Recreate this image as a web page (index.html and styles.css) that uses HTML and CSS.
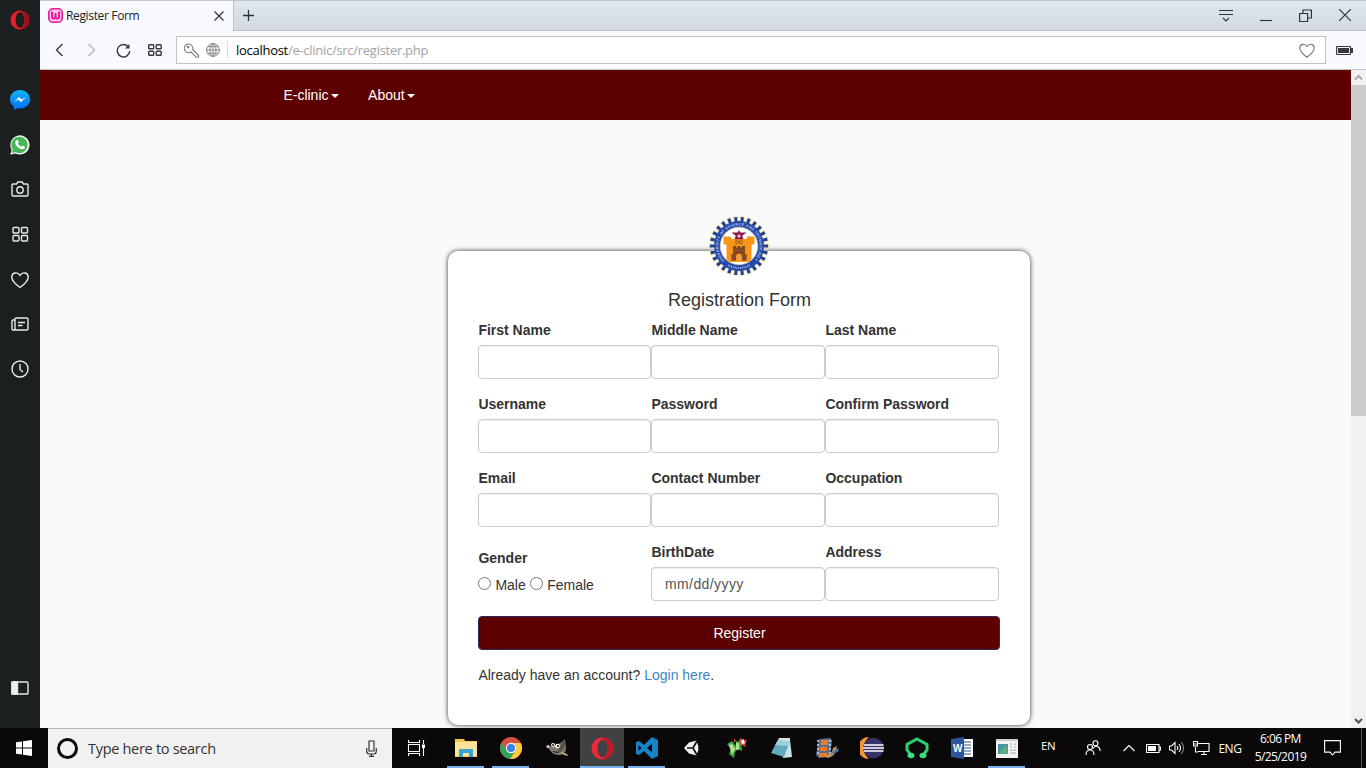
FILE: index.html
```html
<!DOCTYPE html>
<html lang="en">
<head>
<meta charset="utf-8">
<title>Register Form</title>
<link rel="stylesheet" href="styles.css">
</head>
<body>
<div class="desktop">
  <div class="browser">
    <aside class="sidebar">
      <svg class="side-opera" width="20" height="20" viewBox="0 0 22 22"><ellipse cx="11" cy="11" rx="10.500" ry="10.500" fill="#e81c2e"/><path d="M11 .5a10.500 10.500 0 0 1 0 21c3-1 5-5.500 5-10.500S14 1.500 11 .5z" fill="#9c0f1c"/><ellipse cx="11" cy="11" rx="4.800" ry="8.400" fill="#1b1f1f"/></svg>
      <svg class="s1" width="20" height="20" viewBox="0 0 20 20"><defs><linearGradient id="ms" x2="0" y2="1"><stop stop-color="#16b4f8"/><stop offset="1" stop-color="#006cff"/></linearGradient></defs><path d="M10 0c5.600 0 10 4 10 9.300s-4.400 9.300-10 9.300q-1.500 0-2.800-.4L4 20v-3.200C1.500 15 0 12.400 0 9.300 0 4 4.400 0 10 0z" fill="url(#ms)"/><path d="M4 12l5-5 2.600 2.500L16 7l-5 5-2.600-2.500z" fill="#fff"/></svg>
      <svg class="s2" width="20" height="20" viewBox="0 0 20 20"><path d="M.3 19.700l1.300-4.900A9.600 9.600 0 1 1 5.300 18.400z" fill="#f0f0f0"/><path d="M2 18l.9-3.300A8.100 8.100 0 1 1 5.500 17z" fill="#43b854"/><path d="M6.700 5.200c.8-.5 1.400-.1 1.900 1.600.3.900-.6 1.200-.6 1.700.7 1.500 1.800 2.500 3.400 3.200.5 0 .8-1.200 1.400-1 1.900.8 2.300 1 2 1.900-.5 1.500-2.200 2-3.600 1.500-3-.9-5-2.900-6-5.600-.4-1.400.3-2.600 1.500-3.300z" fill="#fff"/></svg>
      <svg class="line s3" width="18" height="18" viewBox="0 0 18 18"><path d="M2 4h3.500l1.300-2h4.400l1.300 2H16a1 1 0 0 1 1 1v10a1 1 0 0 1-1 1H2a1 1 0 0 1-1-1V5a1 1 0 0 1 1-1z"/><circle cx="9" cy="10" r="3.200"/></svg>
      <svg class="line s4" width="18" height="18" viewBox="0 0 18 18"><rect x="2" y="2.500" width="6" height="5.500" rx="1"/><rect x="10.500" y="2.500" width="6" height="5.500" rx="1"/><rect x="2" y="10.500" width="6" height="5.500" rx="1"/><rect x="10.500" y="10.500" width="6" height="5.500" rx="1"/></svg>
      <svg class="line s5" width="18" height="18" viewBox="0 0 18 18"><path d="M9 16.500C5.500 14 .8 10 .8 6 .8 1.500 6.500.400 9 4.300 11.500.400 17.200 1.500 17.200 6c0 4-4.700 8-8.200 10.500z"/></svg>
      <svg class="line s6" width="18" height="18" viewBox="0 0 18 18"><path d="M4 5H2a1 1 0 0 0-1 1v8a1 1 0 0 0 1 1h2M5 3h11a1 1 0 0 1 1 1v10a1 1 0 0 1-1 1H3a1 1 0 0 0 1-1V4a1 1 0 0 1 1-1zM7 7.500h7M7 10.500h4.500"/></svg>
      <svg class="line s7" width="18" height="18" viewBox="0 0 18 18"><circle cx="9" cy="9" r="8"/><path d="M9 4v5.500l3 2.500"/></svg>
      <svg class="line s8" width="18" height="14" viewBox="0 0 18 14"><rect x="1" y="1" width="16" height="12" rx=".8"/><path d="M1 1h5.500v12H1z" fill="#f0f0f0"/></svg>
    </aside>
    <div class="window">
      <header class="tabbar">
        <div class="tab">
          <svg width="15" height="15" viewBox="0 0 15 15"><rect x=".8" y=".8" width="13.400" height="13.400" rx="4" fill="#f7c3e5" stroke="#e6189c" stroke-width="1.600"/><path d="M4 3.600v5.200q0 1.700 1.700 1.700t1.800-1.700V5v3.800q0 1.700 1.800 1.700T11 8.800V3.600" fill="none" stroke="#e6189c" stroke-width="1.900"/></svg>
          <span class="tab-title">Register Form</span>
          <svg class="tab-close" width="10" height="10" viewBox="0 0 10 10"><path d="M.5.500l9 9m0-9l-9 9"/></svg>
        </div>
        <svg class="new-tab" width="11" height="11" viewBox="0 0 11 11"><path d="M5.500 0v11M0 5.500h11"/></svg>
        <div class="controls">
          <svg width="14" height="13" viewBox="0 0 14 13"><path d="M0 1.500h14M0 5.500h14M4 9l3 3 3-3"/></svg>
          <svg width="12" height="13" viewBox="0 0 12 13"><path d="M0 11.500h12"/></svg>
          <svg width="13" height="13" viewBox="0 0 13 13"><path d="M.6 4.500h8v8h-8zM4 4.500V1h8.400v8H8.600"/></svg>
          <svg width="12" height="12" viewBox="0 0 12 12"><path d="M0 0l12 12M12 0L0 12"/></svg>
        </div>
      </header>
      <div class="toolbar">
        <svg class="t1" width="9" height="14" viewBox="0 0 9 14"><path d="M7.500 1L1.500 7l6 6"/></svg>
        <svg class="t2" width="9" height="14" viewBox="0 0 9 14"><path d="M1.500 1l6 6-6 6"/></svg>
        <svg class="t3" width="15" height="15" viewBox="0 0 15 15"><path d="M12.600 4.200A6.200 6.200 0 1 0 13.700 8"/><path d="M13.500 1v4.500H9z" fill="#35393e" stroke="none"/></svg>
        <svg class="t4" width="14" height="12" viewBox="0 0 14 12"><rect x=".7" y=".7" width="5" height="4" rx=".8"/><rect x="8.200" y=".7" width="5" height="4" rx=".8"/><rect x=".7" y="7.200" width="5" height="4" rx=".8"/><rect x="8.200" y="7.200" width="5" height="4" rx=".8"/></svg>
        <div class="address">
          <svg width="15" height="15" viewBox="0 0 15 15"><path d="M8.700 6.500l5.800 5.500v2.300h-2.300L7 8.900A4.300 4.300 0 1 1 8.700 6.500z"/><circle cx="4" cy="4" r=".8"/></svg>
          <svg class="globe" width="14" height="14" viewBox="0 0 14 14"><circle cx="7" cy="7" r="6.400"/><ellipse cx="7" cy="7" rx="3" ry="6.400"/><path d="M7 .5v13M.5 7h13M1.500 3.700h11M1.500 10.300h11"/></svg>
          <span class="divider"></span>
          <span class="url"><b>localhost</b>/e-clinic/src/register.php</span>
          <svg class="heart" width="16" height="15" viewBox="0 0 16 15"><path d="M8 14.200C5 12 .8 8.500.8 5 .8.800 6 0 8 3.500 10 0 15.200.800 15.200 5c0 3.500-4.200 7-7.200 9.200z"/></svg>
        </div>
        <svg class="batt" width="17" height="9" viewBox="0 0 17 9"><rect x=".5" y=".5" width="14" height="8" rx="1"/><path d="M2 2h11v5H2zM15 2h2v5h-2z" fill="#35393e" stroke="none"/></svg>
      </div>
      <div class="viewport">
        <main class="page">
          <nav class="navbar">
            <a>E-clinic<i class="caret"></i></a>
            <a>About<i class="caret"></i></a>
          </nav>
          <form class="card">
            <svg class="logo" width="60" height="60" viewBox="-30 -30 60 60">
              <circle r="27.200" fill="none" stroke="#eadf9e" stroke-width="5.400" pathLength="52" stroke-dasharray="1.300 .7" stroke-dashoffset=".65"/>
              <circle r="25.800" fill="#eadf9e"/>
              <circle r="26.700" fill="none" stroke="#1d3f9c" stroke-width="4.800" pathLength="52" stroke-dasharray=".9 1.100" stroke-dashoffset=".45"/>
              <circle r="25" fill="#2449ab"/>
              <circle r="18.800" fill="#fff" stroke="#d8d5ac" stroke-width=".6"/>
              <path id="ring" d="M-14.600 14.600A20.600 20.600 0 1 1 14.600 14.600" fill="none"/>
              <text class="seal"><textPath href="#ring" textLength="95">UNIVERSITY OF SCIENCE AND TECHNOLOGY</textPath></text>
              <path d="M-11 19a22 22 0 0 0 22 0" fill="none" stroke="#9db2e0" stroke-width="2" stroke-dasharray="1 .8"/>
              <path d="M-15.500-9.500h7l1 2.500h15l1-2.500h7v7.500l-3 1V12q0 4-4.500 4H-8q-4.500 0-4.500-4V-1l-3-1z" fill="#fa9518"/>
              <path d="M0-16l1.300 2.500 6.200 0-4.300 3.200 1.300 3.500H-4.500l1.300-3.500-4.300-3.200 6.200 0z" fill="#8b1747"/><circle cy="-10" r="1.600" fill="#e8d9df"/>
              <path d="M-7.500 14.500V8.500l1.500-1V0h3v1.500h1.500V0h3v1.500H3V0h3v7.500l1.500 1v6H3v-4a3 3 0 0 0-6 0v4z" fill="#80461f"/><path d="M-3-6L3-2M3-6l-6 4M-3-6v5M3-6v5M0-6v4M-5 4.500H5M-6 8.500h3M3 8.500h3M-6 11.500h3M3 11.500h3" stroke="#96602c" stroke-width=".8"/><path d="M-1.500 14v-4q1.500-2 3 0v4z" fill="#e3a15d"/>
            </svg>
            <h4 class="form-title">Registration Form</h4>
            <div class="fields">
              <label class="field">First Name<input></label>
              <label class="field">Middle Name<input></label>
              <label class="field">Last Name<input></label>
              <label class="field">Username<input></label>
              <label class="field">Password<input type="password"></label>
              <label class="field">Confirm Password<input type="password"></label>
              <label class="field">Email<input></label>
              <label class="field">Contact Number<input></label>
              <label class="field">Occupation<input></label>
              <div class="field gender">Gender
                <div class="radios"><input type="radio" name="g"><span class="male">Male</span><input type="radio" name="g"><span>Female</span></div>
              </div>
              <label class="field">BirthDate<input class="date" value="mm/dd/yyyy"></label>
              <label class="field">Address<input></label>
            </div>
            <button type="button" class="register">Register</button>
            <p class="login">Already have an account? <a>Login here</a>.</p>
          </form>
        </main>
        <div class="scrollbar">
          <svg width="15" height="15" viewBox="0 0 15 15"><path d="M4 9.500L7.500 6 11 9.500" stroke="#a9a9a9"/></svg>
          <div class="thumb"></div>
          <svg class="down" width="15" height="15" viewBox="0 0 15 15"><path d="M4 6l3.500 3.500L11 6" stroke="#505050"/></svg>
        </div>
      </div>
    </div>
  </div>
  <footer class="taskbar">
    <div class="start"><svg width="16" height="16" viewBox="0 0 16 16"><path d="M0 2.200L6 1.400v6.100H0zM7 1.200L16 0v7.500H7zM0 8.500h6v6.100l-6-.8zM7 8.500h9V16l-9-1.200z" fill="#fff"/></svg></div>
    <div class="search"><span class="cortana"></span><span>Type here to search</span>
      <svg width="11" height="17" viewBox="0 0 11 17"><path d="M3 1h5v10H3zM.7 8v3q0 3 2.500 3h4.600q2.500 0 2.500-3V8M5.500 14v2.400M3 16.400h5"/></svg></div>
    <div class="view"><svg width="18" height="16" viewBox="0 0 18 16"><path d="M1.500 0v2.500h11V0M1.500 16v-2.500h11V16M1.500 4.500h11v7h-11zM16.500 0v4M16.500 8v8" fill="none" stroke="#fff" stroke-width="1.100"/><path d="M15 4.500h3V8h-3z" fill="#fff"/></svg></div>
    <div class="apps">
      <div class="app run"><svg width="22" height="20" viewBox="0 0 22 20"><path d="M0 1h9l1 2H22v16H0z" fill="#f5c84c"/><path d="M0 4h22v14H0z" fill="#fde49a"/><path d="M4 19v-8h14v8h-4v-4H8v4z" fill="#38a4d4"/></svg></div>
      <div class="app run"><svg width="22" height="22" viewBox="-11 -11 22 22"><circle r="11" fill="#d94f43"/><path d="M-9.500-5.500A11 11 0 0 0-1 10.950L5 2-5 2z" fill="#2fa45b"/><path d="M0-5H9.800A11 11 0 0 1-1 10.950L5 2z" fill="#fcca3f"/><circle r="5.200" fill="#fff"/><circle r="4.100" fill="#3f7ee8"/></svg></div>
      <div class="app"><svg width="24" height="20" viewBox="0 0 24 20"><path d="M4 8q5 2 8-2 4 0 8-5l1 9q0 6-6 7-8 0-10-5-2-1-1-4z" fill="#817b6b"/><path d="M12 15q6-1 8-7V1l-4 5z" fill="#5b564c"/><circle cx="8" cy="7" r="2" fill="#fff"/><circle cx="12.500" cy="8" r="2.300" fill="#fff"/><circle cx="8" cy="7" r=".9"/><circle cx="13" cy="8" r="1"/><circle cx="3" cy="8.500" r="1.600" fill="#ccc"/><path d="M7 13l7 1-1 1q-4 0-6-2z" fill="#222"/><path d="M15 14l7 2 1 2-4-1z" fill="#d0b394"/></svg></div>
      <div class="app active run"><svg width="23" height="23" viewBox="0 0 23 23"><circle cx="11.500" cy="11.500" r="11" fill="#ec2839"/><path d="M11.500.500a11 11 0 0 1 0 22q6-5 5-11t-5-11z" fill="#ba1b29"/><ellipse cx="11.500" cy="11.500" rx="5" ry="8.800" fill="#404143"/></svg></div>
      <div class="app run"><svg width="24" height="24" viewBox="0 0 24 24"><path d="M17 1l6 3v16l-6 3-8-8-5 4-3-1V6l3-1 5 4zM17 7.500L12 12l5 4.500zM3.500 9v6l3-3z" fill="#1684c9" fill-rule="evenodd"/></svg></div>
      <div class="app"><svg width="18" height="18" viewBox="0 0 18 18"><path d="M1 9L6 3.500 13.500 1.500l2 6.500L15 9l.5 1.500-2 6L6 14.500z" fill="#f0f0f0"/><path d="M4 9h6l4-7M10 9l4 7" fill="none" stroke="#111" stroke-width="1.700"/></svg></div>
      <div class="app"><svg width="22" height="22" viewBox="0 0 22 22"><path d="M1 7l5-3 4 5V4l5 1 1 9-4-2-3 3-1 6-5-4 2-5z" fill="#35aa46"/><path d="M3 8l3-1 4 6V6h3v7L9 12l-3 6z" fill="#b8df91"/><path d="M8 1l2 3-2 2zM13 3l2-2 2 2 4 0-2 4 1 3-5-2-2-2z" fill="#d8483a"/><path d="M15 4l3-2v3l2 1-4 1z" fill="#fff"/></svg></div>
      <div class="app"><svg width="24" height="22" viewBox="0 0 24 22"><path d="M9 1l11 2 2 17-9 1z" fill="#c9e3e9"/><path d="M8 3l12 1-6 16L1 16z" fill="#62abbd"/><path d="M8 3l12 1-2 5L5 8z" fill="#9fd0dc"/><path d="M9 1h11v3L8 3z" fill="#d8e4e5"/></svg></div>
      <div class="app"><svg width="24" height="22" viewBox="0 0 24 22"><path d="M4 2L15 1l2 2-2 17-11 1-3-3z" fill="#54708e"/><path d="M6 3h7v5H6zM5 10h7v4H5zM4 16h8v4H4z" fill="#f07926"/><path d="M3 3v16M15 3v14" stroke="#d2deea" stroke-width="1.500" stroke-dasharray="2 2"/><path d="M12 21q9-1 10-12l-4 2q-1 7-8 7z" fill="#bd9463"/><path d="M15 17l5-4 4-2-1 4z" fill="#4774ac"/></svg></div>
      <div class="app"><svg width="24" height="22" viewBox="0 0 24 22"><path d="M9 0a11 11 0 0 0 0 22Q-2 11 9 0z" fill="#f29a32"/><circle cx="13.500" cy="11" r="10.300" fill="#393169"/><path d="M4 8h19.500M3 11h21M4 14h19.500" stroke="#fff" stroke-width="1.500"/></svg></div>
      <div class="app"><svg width="24" height="22" viewBox="0 0 24 22"><path d="M6 18L2 13V7.500L12 2l10 5.500V13l-4 5" fill="none" stroke="#28cf75" stroke-width="3"/><ellipse cx="6" cy="18.500" rx="3.500" ry="2.800" fill="#3bdc82"/><ellipse cx="18" cy="18.500" rx="3.500" ry="2.800" fill="#3bdc82"/></svg></div>
      <div class="app"><svg width="22" height="22" viewBox="0 0 22 22"><path d="M12 2h10v18H12z" fill="#fff"/><path d="M13 5h7m-7 3h7m-7 3h7m-7 3h7m-7 3h7" stroke="#2b5797" stroke-width="1.100"/><path d="M0 2L13 0v22L0 20z" fill="#2b579a"/><text x="2" y="15" class="word">W</text></svg></div>
      <div class="app run"><svg width="22" height="19" viewBox="0 0 22 19"><path d="M0 0h22v19H0z" fill="#f3f3f0"/><path d="M0 0h22v2H0z" fill="#c9cece"/><path d="M2 5h10v10H2z" fill="#4595a1"/><path d="M3 14l7-8 2 9z" fill="#61ad85"/><path d="M14 5h2m2 0h2m-6 3h2m2 0h2m-6 3h6m-6 3h6" stroke="#a7acaf"/></svg></div>
    </div>
    <div class="lang">EN</div>
    <div class="tray">
      <svg class="people" width="16" height="16" viewBox="0 0 16 16"><circle cx="5" cy="7" r="2.500"/><circle cx="10.500" cy="3.300" r="2.500"/><path d="M1 15q0-5 4-5t4 5M8 8.500q2-3 4.500-2t2.700 4.500"/></svg>
      <svg class="up" width="12" height="8" viewBox="0 0 12 8"><path d="M.5 7L6 1.500 11.500 7"/></svg>
      <svg class="bat" width="15" height="9" viewBox="0 0 15 9"><path d="M.5.500h12.500v8H.5zM13 3h1.500v3H13"/><path d="M2 2h8v5H2z" fill="#fff" stroke="none"/></svg>
      <svg class="vol" width="16" height="14" viewBox="0 0 16 14"><path d="M.5 5h2L6 1.500v11L2.500 9h-2zM8 5q1.500 2 0 4M10 3q3 4 0 8"/><path d="M12.500 1q4 6 0 12" stroke="#888"/></svg>
      <svg class="net" width="17" height="15" viewBox="0 0 17 15"><path d="M5 2.500h11v8H5M8 13.500h6M11 10.500v3M2.500 6v5H5M.5.500h4V5h-4zM.5 3h4"/></svg>
      <span class="eng">ENG</span>
      <div class="clock"><span>6:06 PM</span><span>5/25/2019</span></div>
      <svg class="note" width="17" height="16" viewBox="0 0 17 16"><path d="M.6.600h15.800v11.500H11L8.500 15 6 12.100H.6z"/></svg>
      <i class="peek"></i>
    </div>
  </footer>
</div>
</body>
</html>
```
FILE: styles.css
```css
* { box-sizing: border-box; }
body { margin: 0; overflow: hidden; font-family: "Liberation Sans", Arial, sans-serif; font-size: 14px; line-height: 20px; color: #333; }
svg { display: block; flex: none; }
.desktop { width: 1366px; height: 768px; display: flex; flex-direction: column; overflow: hidden; }
.browser { height: 728px; display: flex; }
.sidebar { width: 40px; background: #1b1f1f; display: flex; flex-direction: column; align-items: center; padding-top: 10px; }
.line { fill: none; stroke: #e9eaea; stroke-width: 1.4; margin-right: 1px; }
.s1 { margin-top: 60px; }
.s2 { margin-top: 25px; }
.s3 { margin-top: 25px; }
.s4 { margin-top: 27px; }
.s5 { margin-top: 28px; }
.s6 { margin-top: 26px; }
.s7 { margin-top: 27px; }
.s8 { margin-top: 303px; }
.window { flex: 1; display: flex; flex-direction: column; }
.tabbar { height: 31px; display: flex; align-items: center; background: linear-gradient(#dfe6ed, #d4d9e0); border-bottom: 1px solid #bfc4c7; border-top: 1px solid #c3c7ca; font: 12px "Open Sans", sans-serif; color: #202326; }
.tab { width: 194px; height: 31px; background: #f8f9fc; border-right: 1px solid #bfc4c7; display: flex; align-items: center; padding: 0 9px 2px 8px; margin-bottom: -2px; }
.tab-title { margin-left: 3px; font-size: 12px; letter-spacing: -.35px; }
.tab-close { margin-left: auto; fill: none; stroke: #303439; stroke-width: 1.2; }
.new-tab { margin-left: 9px; stroke: #303439; stroke-width: 1.3; }
.controls { margin-left: auto; display: flex; align-items: center; gap: 27px; padding-right: 14px; margin-right: 1px; margin-top: -1px; fill: none; stroke: #303439; stroke-width: 1.2; }
.toolbar { height: 39px; background: #f8f9fc; border-bottom: 1px solid #c4c8ca; display: flex; align-items: center; fill: none; stroke: #35393e; stroke-width: 1.4; }
.t1 { margin-left: 15px; }
.t2 { margin-left: 23px; stroke: #b5b8bc; }
.t3 { margin-left: 20px; }
.t4 { margin-left: 17px; }
.address { margin-left: 14px; width: 1150px; height: 28px; border: 1px solid #bfc4c7; background: #fff; display: flex; align-items: center; padding: 0 10px 0 7px; stroke: #777a7e; stroke-width: 1.1; }
.globe { margin-left: 7px; stroke-width: .9; }
.divider { width: 1px; height: 18px; background: #ddd; margin: 0 8px 0 7px; }
.url { font: 13px "Open Sans", sans-serif; color: #a3a3a3; letter-spacing: -.28px; }
.url b { font-weight: 400; color: #000; }
.heart { margin-left: auto; }
.batt { margin-left: 10px; stroke-width: 1.2; }
.viewport { flex: 1; display: flex; min-height: 0; }
.page { flex: 1; background: #f9f9f9; overflow: hidden; }
.navbar { height: 50px; background: #5c0000; display: flex; align-items: center; padding-left: 243.4px; gap: 29px; color: #fff; }
.navbar a { display: flex; align-items: center; }
.caret { border: 4px solid transparent; border-top-color: #fff; border-bottom: 0; margin-left: 2.6px; margin-top: 1px; }
.card { position: relative; width: 582px; height: 474px; margin: 131px 0 0 408px; padding: 39px 30px 0; background: #fff; border-radius: 10px; box-shadow: 0 0 5px #333; }
.logo { position: absolute; left: 261px; top: -35px; }
.seal { font: bold 3.8px "Liberation Sans", sans-serif; fill: #b3c3ea; }
.form-title { margin: 0 0 10px; font-size: 18px; font-weight: 400; line-height: 20px; text-align: center; text-indent: 1px; }
.fields { display: grid; grid-template-columns: 173px 174px 174px; }
.field { height: 74px; font-weight: 700; text-indent: .4px; }
.field > input { display: block; width: 100%; height: 34px; margin: 5px 0 0; border: 1px solid #ccc; border-radius: 4px; box-shadow: inset 0 1px 1px rgba(0,0,0,.075); background: #fff; padding: 6px 13px; font: 14px "Liberation Sans", sans-serif; color: #555; outline: 0; }
.field > .date { font-size: 14px; letter-spacing: .4px; }
.gender { padding-top: 6px; }
.radios { display: flex; margin-top: 7px; font-weight: 400; }
.radios input { width: 13px; height: 13px; margin: 2px 4px 0 0; }
.male { margin-right: 4px; }
.register { display: block; width: 522px; height: 34px; padding: 0; background: #5c0000; border: 1px solid #2e2a55; border-radius: 4px; color: #fff; font: 14px "Liberation Sans", sans-serif; text-indent: 1px; }
.login { margin: 15px 0 0; text-indent: .4px; }
.login a { color: #4385c0; }
.scrollbar { width: 15px; background: #f1f1f1; display: flex; flex-direction: column; fill: none; stroke-width: 2; }
.thumb { height: 331px; background: #cdcdcd; }
.down { margin-top: auto; }
.taskbar { height: 40px; background: #0b0809; display: flex; align-items: stretch; color: #fff; font: 12px "Open Sans", sans-serif; }
.start { width: 48px; display: flex; align-items: center; justify-content: center; }
.search { width: 344px; background: #f1f1f1; border-top: 1px solid #b5b5b5; display: flex; align-items: center; padding: 0 15px 0 9px; font-size: 14.5px; color: #333; letter-spacing: -.3px; }
.search svg { margin-left: auto; fill: none; stroke: #333; stroke-width: 1.2; }
.cortana { width: 21px; height: 21px; border: 3px solid #0b0b0b; border-radius: 50%; margin-right: 10px; }
.view { width: 48px; display: flex; align-items: center; justify-content: center; }
.apps { display: flex; margin-left: 3px; }
.app { width: 45px; display: flex; align-items: center; justify-content: center; border: solid transparent; border-width: 0 4px; }
.app:nth-child(n+3) { transform: translateX(1px); }
.run { background: linear-gradient(#76b0ee, #76b0ee) bottom / 100% 2px no-repeat padding-box; }
.active { background: linear-gradient(#76b0ee, #76b0ee) bottom / 100% 2px no-repeat, #404143; border-width: 0; width: 44px; margin: 0 0 0 1px; }
.word { font: bold 10px "Liberation Sans", sans-serif; fill: #fff; }
.lang { margin: 10px 0 0 13px; font-size: 11.5px; line-height: 16px; letter-spacing: -.3px; }
.tray { flex: 1; display: flex; align-items: center; fill: none; stroke: #fff; stroke-width: 1.1; }
.people { margin-left: 30px; }
.up { margin-left: 22px; }
.bat { margin-left: 11px; }
.vol { margin-left: 8px; }
.net { margin-left: 8px; }
.eng { margin-left: 8px; width: 24px; letter-spacing: -.5px; }
.clock { width: 54px; margin-left: 11px; display: flex; flex-direction: column; align-items: center; line-height: 18px; letter-spacing: -.6px; white-space: nowrap; }
.note { margin-left: 17px; }
.peek { margin-left: auto; margin-right: 4px; width: 1px; height: 40px; background: #555; }
```
